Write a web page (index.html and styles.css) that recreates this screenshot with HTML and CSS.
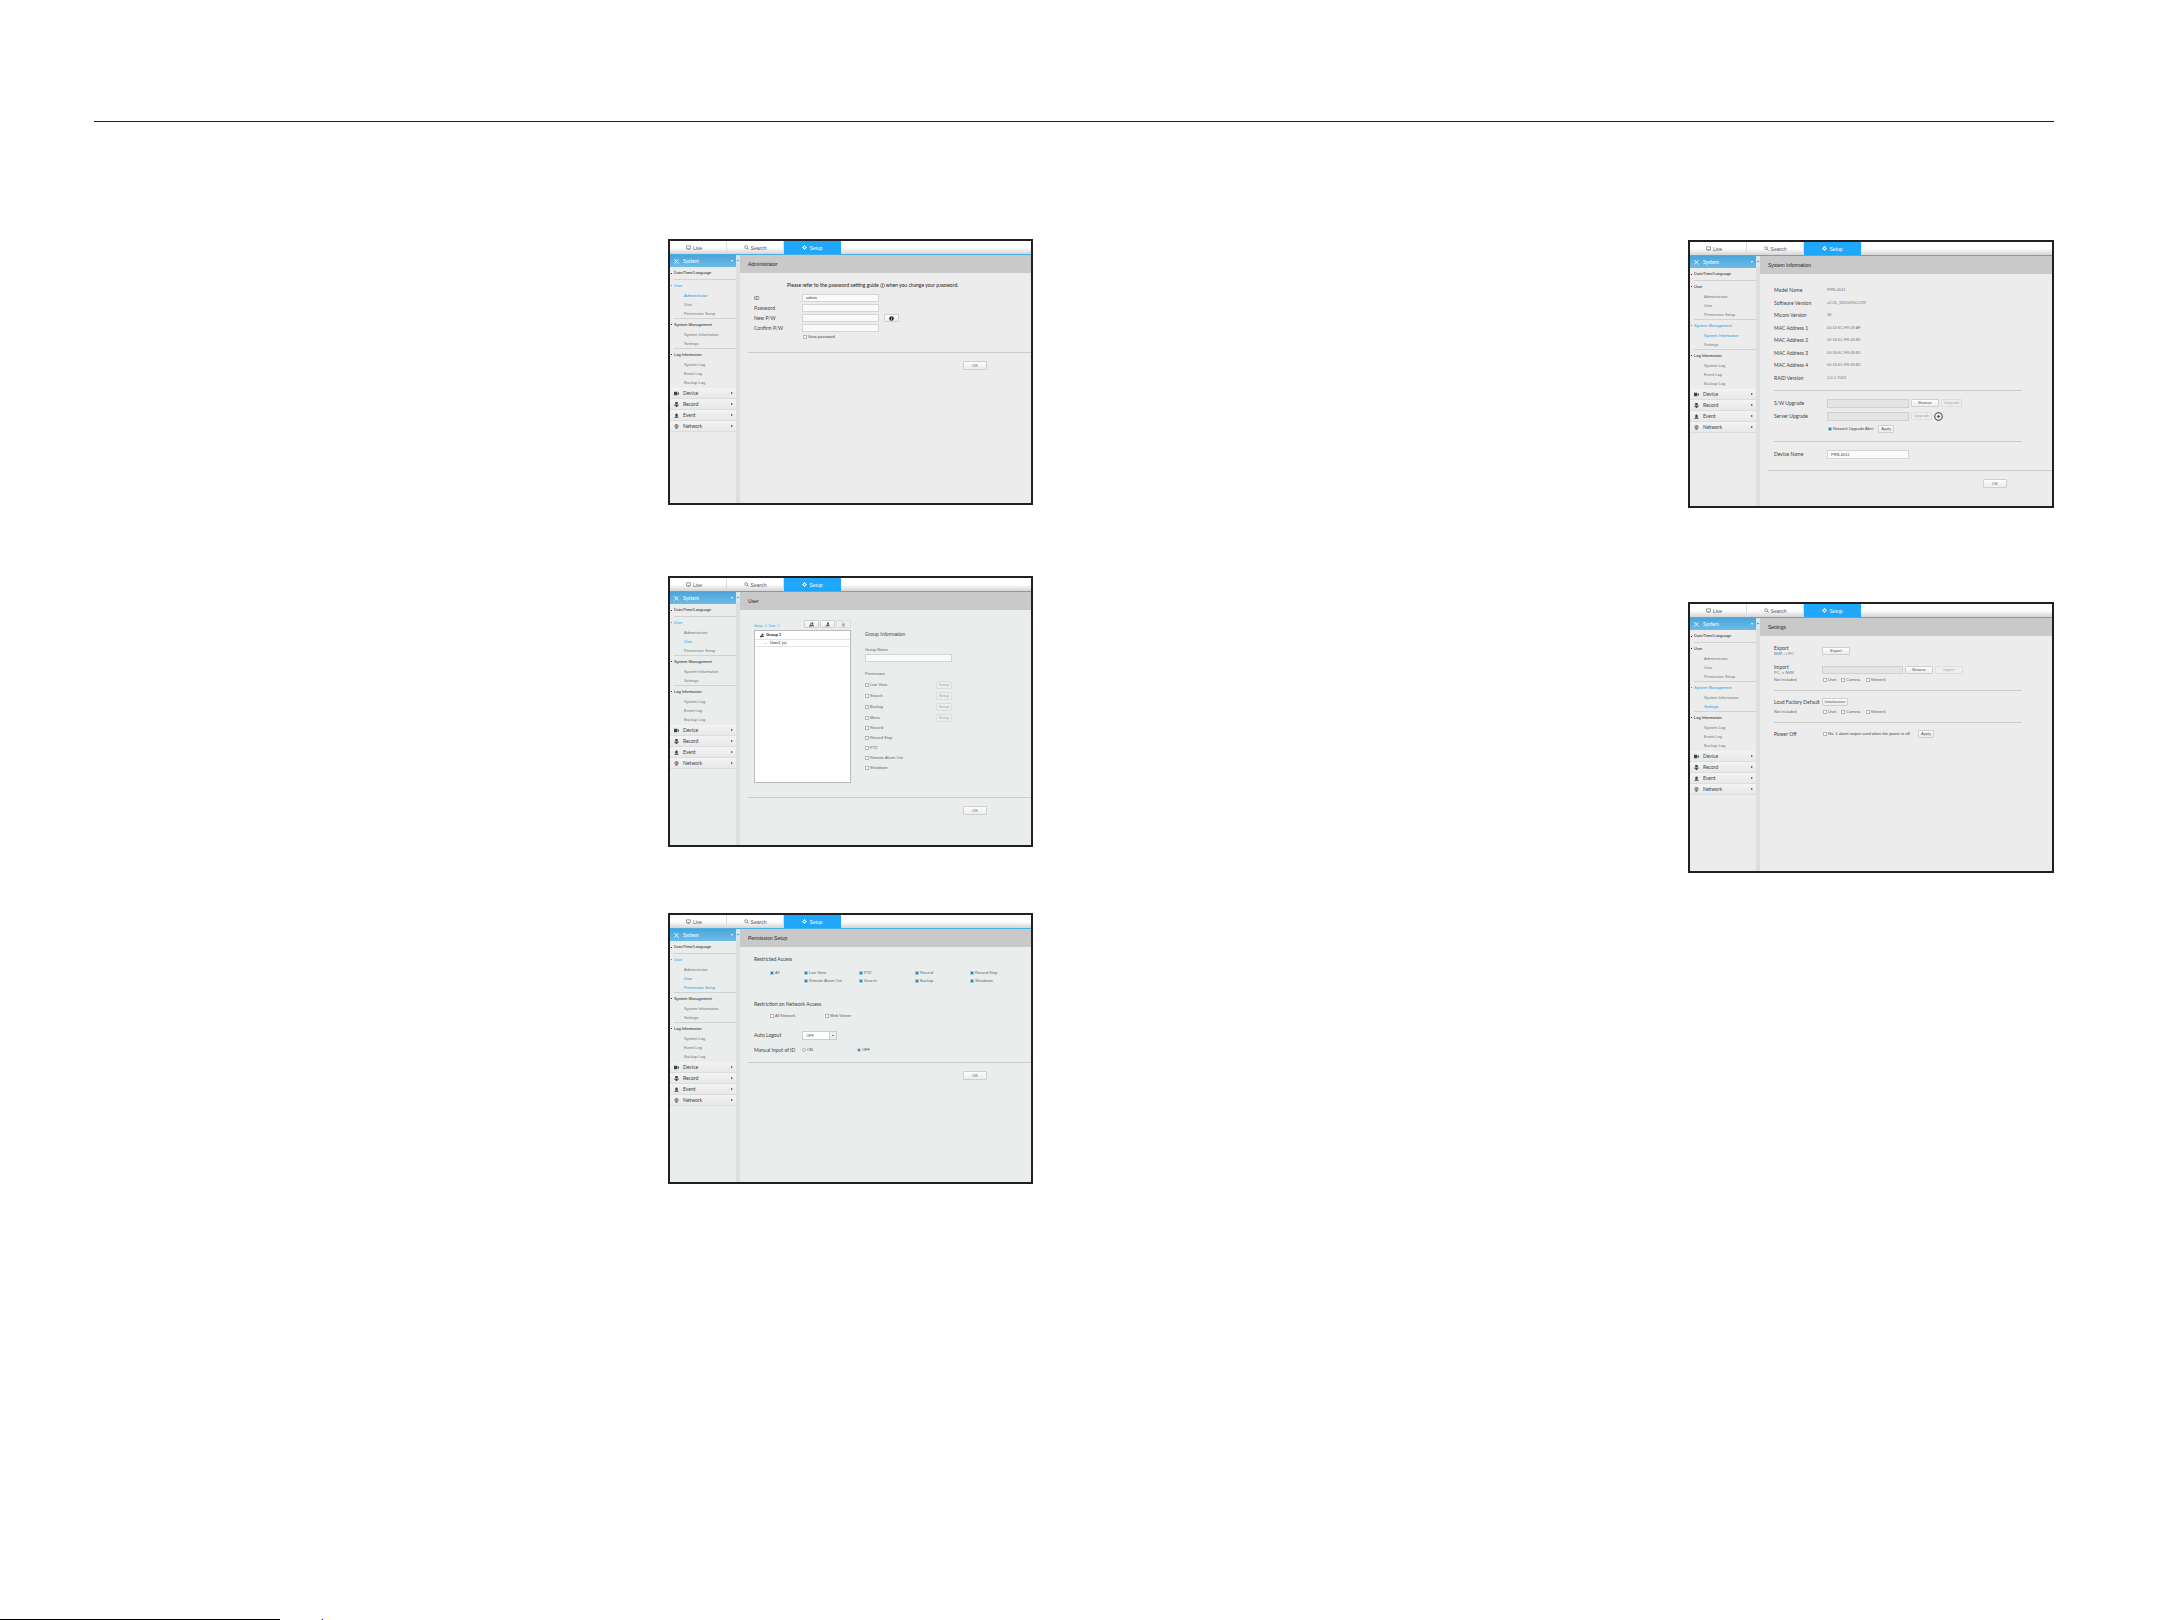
FILE: index.html
```html
<!DOCTYPE html>
<html lang="en">

<head>
    <meta charset="utf-8">
    <title>Web Viewer Setup</title>
    <link rel="stylesheet" href="styles.css">
</head>

<body>
    <svg class="sprite" aria-hidden="true">
        <symbol id="live" viewBox="0 0 12 12"><path d="M1 2h10v7H1zM4 11h4" fill="none" stroke="currentColor" stroke-width="1.4"/></symbol>
        <symbol id="search" viewBox="0 0 12 12"><circle cx="5" cy="5" r="3.5" fill="none" stroke="currentColor" stroke-width="1.3"/><path d="M7.5 7.5L11 11" stroke="currentColor" stroke-width="1.6"/></symbol>
        <symbol id="gear" viewBox="0 0 12 12"><circle cx="6" cy="6" r="3" fill="none" stroke="currentColor" stroke-width="2.4"/><path d="M6 0v3M6 9v3M0 6h3M9 6h3M2 2l2 2M8 8l2 2M10 2L8 4M4 8l-2 2" stroke="currentColor" stroke-width="1.6"/></symbol>
        <symbol id="tools" viewBox="0 0 12 12"><path d="M2 1l9 10M10 1L1 11" stroke="currentColor" stroke-width="2"/><path d="M1 1l3 1-2 2z" fill="currentColor"/></symbol>
        <symbol id="device" viewBox="0 0 12 12"><path d="M0 2h8v8H0zM9 5l3-2v6L9 7z" fill="currentColor"/></symbol>
        <symbol id="record" viewBox="0 0 12 12"><path d="M3 0h6v5H3zM1 6h10v3H8v3H4V9H1z" fill="currentColor"/></symbol>
        <symbol id="event" viewBox="0 0 12 12"><path d="M3 9V4a3 3 0 0 1 6 0v5zM1 10h10v2H1z" fill="currentColor"/></symbol>
        <symbol id="network" viewBox="0 0 12 12"><circle cx="6" cy="5" r="4" fill="none" stroke="currentColor" stroke-width="1.5"/><path d="M2 5h8M6 1v10M3 11h6" stroke="currentColor"/></symbol>
        <symbol id="group" viewBox="0 0 12 12"><circle cx="8" cy="3" r="2.4" fill="currentColor"/><circle cx="4" cy="5" r="1.8" fill="currentColor"/><path d="M5 10c0-5 7-5 7 0zM0 11c0-5 6-5 6 0z" fill="currentColor"/></symbol>
        <symbol id="person" viewBox="0 0 12 12"><circle cx="7" cy="3" r="2.4" fill="currentColor"/><path d="M3 10c0-6 8-6 8 0zM0 9h5v1H0z" fill="currentColor"/></symbol>
        <symbol id="trash" viewBox="0 0 12 12"><path d="M2 2h8v1H2zM3 4h6v7H3z" fill="currentColor"/></symbol>
        <symbol id="info" viewBox="0 0 12 12"><circle cx="6" cy="6" r="5" fill="none" stroke="currentColor"/><path d="M6 3v2M6 5v4" stroke="currentColor" stroke-width="1.3"/></symbol>
        <symbol id="infodark" viewBox="0 0 12 12"><circle cx="6" cy="6" r="5.5" fill="currentColor"/><path d="M6 2v2M6 5v5" stroke="#fff" stroke-width="1.4"/></symbol>
        <symbol id="refresh" viewBox="0 0 12 12"><circle cx="6" cy="6" r="5" fill="none" stroke="currentColor" stroke-width="1.4"/><circle cx="6" cy="6" r="1.6" fill="currentColor"/></symbol>
        <symbol id="up" viewBox="0 0 12 12"><path d="M2 8l4-4 4 4" fill="none" stroke="currentColor" stroke-width="3"/></symbol>
    </svg>

    <main class="sheet">
        <div class="column left">
            <!-- Administrator -->
            <section class="screen short">
                <nav class="tabs">
                    <a href="#" class="live"><svg><use href="#live"/></svg>Live</a>
                    <a href="#"><svg><use href="#search"/></svg>Search</a>
                    <a href="#" class="on"><svg><use href="#gear"/></svg>Setup</a>
                </nav>
                <div class="body">
                    <nav class="side">
                        <a href="#" class="system"><svg><use href="#tools"/></svg>System<i class="down"></i></a>
                        <div class="group first"><a href="#" class="head">Date/Time/Language</a></div>
                        <div class="group"><a href="#" class="head on">User</a><a href="#" class="on">Administrator</a><a href="#">User</a><a href="#">Permission Setup</a></div>
                        <div class="group"><a href="#" class="head">System Management</a><a href="#">System Information</a><a href="#">Settings</a></div>
                        <div class="group last"><a href="#" class="head">Log Information</a><a href="#">System Log</a><a href="#">Event Log</a><a href="#">Backup Log</a></div>
                        <a href="#" class="menu"><svg><use href="#device"/></svg>Device<i></i></a>
                        <a href="#" class="menu"><svg><use href="#record"/></svg>Record<i></i></a>
                        <a href="#" class="menu"><svg><use href="#event"/></svg>Event<i></i></a>
                        <a href="#" class="menu"><svg><use href="#network"/></svg>Network<i></i></a>
                    </nav>
                    <div class="scroll"><span><svg><use href="#up"/></svg></span></div>
                    <div class="main">
                        <h2>Administrator</h2>
                        <form class="admin">
                            <p class="notice">Please refer to the password setting guide <svg><use href="#info"/></svg> when you change your password.</p>
                            <div class="row"><label class="name" for="id">ID</label><input class="text" id="id" type="text" value="admin"></div>
                            <div class="row"><label class="name" for="pw">Password</label><input class="text" id="pw" type="password"></div>
                            <div class="row"><label class="name" for="newpw">New P/W</label><input class="text" id="newpw" type="password"><button type="button" class="guide" aria-label="Password guide"><svg><use href="#infodark"/></svg></button></div>
                            <div class="row"><label class="name" for="confirm">Confirm P/W</label><input class="text" id="confirm" type="password"></div>
                            <div class="row view"><label><input type="checkbox">View password</label></div>
                        </form>
                        <div class="actions"><button>OK</button></div>
                    </div>
                </div>
            </section>

            <!-- User -->
            <section class="screen cool">
                <nav class="tabs">
                    <a href="#" class="live"><svg><use href="#live"/></svg>Live</a>
                    <a href="#"><svg><use href="#search"/></svg>Search</a>
                    <a href="#" class="on"><svg><use href="#gear"/></svg>Setup</a>
                </nav>
                <div class="body">
                    <nav class="side">
                        <a href="#" class="system"><svg><use href="#tools"/></svg>System<i class="down"></i></a>
                        <div class="group first"><a href="#" class="head">Date/Time/Language</a></div>
                        <div class="group"><a href="#" class="head on">User</a><a href="#">Administrator</a><a href="#" class="on">User</a><a href="#">Permission Setup</a></div>
                        <div class="group"><a href="#" class="head">System Management</a><a href="#">System Information</a><a href="#">Settings</a></div>
                        <div class="group last"><a href="#" class="head">Log Information</a><a href="#">System Log</a><a href="#">Event Log</a><a href="#">Backup Log</a></div>
                        <a href="#" class="menu"><svg><use href="#device"/></svg>Device<i></i></a>
                        <a href="#" class="menu"><svg><use href="#record"/></svg>Record<i></i></a>
                        <a href="#" class="menu"><svg><use href="#event"/></svg>Event<i></i></a>
                        <a href="#" class="menu"><svg><use href="#network"/></svg>Network<i></i></a>
                    </nav>
                    <div class="scroll"><span><svg><use href="#up"/></svg></span></div>
                    <div class="main">
                        <h2>User</h2>
                        <form class="users">
                            <div class="tree">
                                <div class="tools">
                                    <span>Group : 1 / User : 1</span>
                                    <button type="button" aria-label="Add group"><svg><use href="#group"/></svg></button>
                                    <button type="button" aria-label="Add user"><svg><use href="#person"/></svg></button>
                                    <button type="button" aria-label="Delete" disabled><svg><use href="#trash"/></svg></button>
                                </div>
                                <ul>
                                    <li class="parent"><svg><use href="#group"/></svg>Group 1</li>
                                    <li><b>∟</b>User1 (a)</li>
                                </ul>
                            </div>
                            <div class="info">
                                <h3>Group Information</h3>
                                <label class="caption" for="gname">Group Name</label>
                                <input class="text" id="gname" type="text">
                                <p class="caption perm">Permission</p>
                                <div class="line tall"><label><input type="checkbox">Live View</label><button type="button" disabled>Setup</button></div>
                                <div class="line tall"><label><input type="checkbox">Search</label><button type="button" disabled>Setup</button></div>
                                <div class="line tall"><label><input type="checkbox">Backup</label><button type="button" disabled>Setup</button></div>
                                <div class="line tall"><label><input type="checkbox">Menu</label><button type="button" disabled>Setup</button></div>
                                <div class="line"><label><input type="checkbox">Record</label></div>
                                <div class="line"><label><input type="checkbox">Record Stop</label></div>
                                <div class="line"><label><input type="checkbox">PTZ</label></div>
                                <div class="line"><label><input type="checkbox">Remote Alarm Out</label></div>
                                <div class="line"><label><input type="checkbox">Shutdown</label></div>
                            </div>
                        </form>
                        <div class="actions"><button>OK</button></div>
                    </div>
                </div>
            </section>

            <!-- Permission Setup -->
            <section class="screen cool">
                <nav class="tabs">
                    <a href="#" class="live"><svg><use href="#live"/></svg>Live</a>
                    <a href="#"><svg><use href="#search"/></svg>Search</a>
                    <a href="#" class="on"><svg><use href="#gear"/></svg>Setup</a>
                </nav>
                <div class="body">
                    <nav class="side">
                        <a href="#" class="system"><svg><use href="#tools"/></svg>System<i class="down"></i></a>
                        <div class="group first"><a href="#" class="head">Date/Time/Language</a></div>
                        <div class="group"><a href="#" class="head on">User</a><a href="#">Administrator</a><a href="#">User</a><a href="#" class="on">Permission Setup</a></div>
                        <div class="group"><a href="#" class="head">System Management</a><a href="#">System Information</a><a href="#">Settings</a></div>
                        <div class="group last"><a href="#" class="head">Log Information</a><a href="#">System Log</a><a href="#">Event Log</a><a href="#">Backup Log</a></div>
                        <a href="#" class="menu"><svg><use href="#device"/></svg>Device<i></i></a>
                        <a href="#" class="menu"><svg><use href="#record"/></svg>Record<i></i></a>
                        <a href="#" class="menu"><svg><use href="#event"/></svg>Event<i></i></a>
                        <a href="#" class="menu"><svg><use href="#network"/></svg>Network<i></i></a>
                    </nav>
                    <div class="scroll"><span><svg><use href="#up"/></svg></span></div>
                    <div class="main">
                        <h2>Permission Setup</h2>
                        <form class="permission">
                            <p class="title">Restricted Access</p>
                            <div class="access">
                                <label><input type="checkbox" checked>All</label>
                                <label><input type="checkbox" checked>Live View</label>
                                <label><input type="checkbox" checked>PTZ</label>
                                <label><input type="checkbox" checked>Record</label>
                                <label><input type="checkbox" checked>Record Stop</label>
                                <label class="second"><input type="checkbox" checked>Remote Alarm Out</label>
                                <label><input type="checkbox" checked>Search</label>
                                <label><input type="checkbox" checked>Backup</label>
                                <label><input type="checkbox" checked>Shutdown</label>
                            </div>
                            <p class="title">Restriction on Network Access</p>
                            <div class="network">
                                <label><input type="checkbox">All Network</label>
                                <label><input type="checkbox">Web Viewer</label>
                            </div>
                            <div class="row logout">
                                <label class="name" for="logout">Auto Logout</label>
                                <select id="logout"><option>OFF</option><option>ON</option></select>
                            </div>
                            <div class="row manual">
                                <span class="name">Manual Input of ID</span>
                                <label><input type="radio" name="manual">ON</label>
                                <label><input type="radio" name="manual" checked>OFF</label>
                            </div>
                        </form>
                        <div class="actions"><button>OK</button></div>
                    </div>
                </div>
            </section>
        </div>

        <div class="column right">
            <!-- System Information -->
            <section class="screen medium">
                <nav class="tabs">
                    <a href="#" class="live"><svg><use href="#live"/></svg>Live</a>
                    <a href="#"><svg><use href="#search"/></svg>Search</a>
                    <a href="#" class="on"><svg><use href="#gear"/></svg>Setup</a>
                </nav>
                <div class="body">
                    <nav class="side">
                        <a href="#" class="system"><svg><use href="#tools"/></svg>System<i class="down"></i></a>
                        <div class="group first"><a href="#" class="head">Date/Time/Language</a></div>
                        <div class="group"><a href="#" class="head">User</a><a href="#">Administrator</a><a href="#">User</a><a href="#">Permission Setup</a></div>
                        <div class="group"><a href="#" class="head on">System Management</a><a href="#" class="on">System Information</a><a href="#">Settings</a></div>
                        <div class="group last"><a href="#" class="head">Log Information</a><a href="#">System Log</a><a href="#">Event Log</a><a href="#">Backup Log</a></div>
                        <a href="#" class="menu"><svg><use href="#device"/></svg>Device<i></i></a>
                        <a href="#" class="menu"><svg><use href="#record"/></svg>Record<i></i></a>
                        <a href="#" class="menu"><svg><use href="#event"/></svg>Event<i></i></a>
                        <a href="#" class="menu"><svg><use href="#network"/></svg>Network<i></i></a>
                    </nav>
                    <div class="scroll"><span><svg><use href="#up"/></svg></span></div>
                    <div class="main">
                        <h2>System Information</h2>
                        <form class="sysinfo">
                            <dl>
                                <dt>Model Name</dt><dd>PRN-4011</dd>
                                <dt>Software Version</dt><dd>v2.26_180509161239</dd>
                                <dt>Micom Version</dt><dd>36</dd>
                                <dt>MAC Address 1</dt><dd>00:16:6C:F8:43:AF</dd>
                                <dt>MAC Address 2</dt><dd>00:16:6C:F8:43:B0</dd>
                                <dt>MAC Address 3</dt><dd>00:16:6C:F8:43:B1</dd>
                                <dt>MAC Address 4</dt><dd>00:16:6C:F8:43:B2</dd>
                                <dt>RAID Version</dt><dd>2.0.5.7063</dd>
                            </dl>
                            <div class="part">
                                <div class="row"><label class="name" for="sw">S/W Upgrade</label><input class="text" id="sw" type="text" disabled><button type="button" class="wide">Browse</button><button type="button" class="upgrade" disabled>Upgrade</button></div>
                                <div class="row"><label class="name" for="server">Server Upgrade</label><input class="text" id="server" type="text" disabled><button type="button" class="upgrade" disabled>Upgrade</button><svg class="refresh"><use href="#refresh"/></svg></div>
                                <div class="row alert"><label><input type="checkbox" checked>Network Upgrade Alert</label><button type="button" class="apply">Apply</button></div>
                            </div>
                            <div class="part">
                                <div class="row"><label class="name" for="dname">Device Name</label><input class="text" id="dname" type="text" value="PRN-4011"></div>
                            </div>
                        </form>
                        <div class="actions"><button>OK</button></div>
                    </div>
                </div>
            </section>

            <!-- Settings -->
            <section class="screen">
                <nav class="tabs">
                    <a href="#" class="live"><svg><use href="#live"/></svg>Live</a>
                    <a href="#"><svg><use href="#search"/></svg>Search</a>
                    <a href="#" class="on"><svg><use href="#gear"/></svg>Setup</a>
                </nav>
                <div class="body">
                    <nav class="side">
                        <a href="#" class="system"><svg><use href="#tools"/></svg>System<i class="down"></i></a>
                        <div class="group first"><a href="#" class="head">Date/Time/Language</a></div>
                        <div class="group"><a href="#" class="head">User</a><a href="#">Administrator</a><a href="#">User</a><a href="#">Permission Setup</a></div>
                        <div class="group"><a href="#" class="head on">System Management</a><a href="#">System Information</a><a href="#" class="on">Settings</a></div>
                        <div class="group last"><a href="#" class="head">Log Information</a><a href="#">System Log</a><a href="#">Event Log</a><a href="#">Backup Log</a></div>
                        <a href="#" class="menu"><svg><use href="#device"/></svg>Device<i></i></a>
                        <a href="#" class="menu"><svg><use href="#record"/></svg>Record<i></i></a>
                        <a href="#" class="menu"><svg><use href="#event"/></svg>Event<i></i></a>
                        <a href="#" class="menu"><svg><use href="#network"/></svg>Network<i></i></a>
                    </nav>
                    <div class="scroll"><span><svg><use href="#up"/></svg></span></div>
                    <div class="main">
                        <h2>Settings</h2>
                        <form class="settings">
                            <div class="row two"><span class="name">Export<small>NVR -&gt; PC</small></span><button type="button" class="wide">Export</button></div>
                            <div class="row two import"><label class="name" for="file">Import<small>PC -&gt; NVR</small></label><input class="text" id="file" type="text" disabled><button type="button" class="wide">Browse</button><button type="button" class="wide" disabled>Import</button></div>
                            <div class="row not"><small class="name">Not Included</small><label class="user"><input type="checkbox">User</label><label class="camera"><input type="checkbox">Camera</label><label><input type="checkbox">Network</label></div>
                            <div class="part">
                                <div class="row"><span class="name">Load Factory Default</span><button type="button" class="init">Initialization</button></div>
                                <div class="row not"><small class="name">Not Included</small><label class="user"><input type="checkbox">User</label><label class="camera"><input type="checkbox">Camera</label><label><input type="checkbox">Network</label></div>
                            </div>
                            <div class="part">
                                <div class="row power"><span class="name">Power Off</span><label><input type="checkbox">No. 1 alarm output used when the power is off.</label><button type="button" class="apply">Apply</button></div>
                            </div>
                        </form>
                    </div>
                </div>
            </section>
        </div>
    </main>
    <footer><span class="bar"></span><span class="dot"></span></footer>
</body>

</html>
```
FILE: styles.css
```css
* {
    box-sizing: border-box;
}

body {
    margin: 0;
    min-height: 100vh;
    display: flex;
    flex-direction: column;
    background-color: #fff;
    font-family: "Liberation Sans", Arial, sans-serif;
    font-size: 4px;
    line-height: 8px;
    color: #444;
}

.sprite {
    display: none;
}

svg {
    width: 5px;
    height: 5px;
    flex: none;
}

a {
    color: inherit;
    text-decoration: none;
}

.sheet {
    margin: 121px 114px 0 94px;
    border-top: 1px solid #231f20;
    display: grid;
    grid-template-columns: 1fr 1fr;
    column-gap: 82px;
}

.column {
    display: flex;
    flex-direction: column;
    align-items: flex-end;
    gap: 66px;
    padding-top: 117px;
}

.column.right {
    gap: 94px;
    padding-top: 118px;
}

.screen {
    width: 366px;
    min-height: 271px;
    display: flex;
    flex-direction: column;
    border: 2px solid #231f20;
    background-color: #ececec;
}

.left .screen {
    width: 365px;
}

.screen.short {
    min-height: 266px;
    margin-bottom: 5px;
}

.screen.medium {
    min-height: 268px;
}

.screen.cool {
    background-color: #e9edec;
}

/* top tabs */
.tabs {
    display: flex;
    height: 14px;
    background: linear-gradient(#fff 50%, #d4d4d4);
    border-bottom: 1px solid #4aaee0;
    font-size: 5px;
}

.tabs a {
    width: 57px;
    display: flex;
    align-items: center;
    justify-content: center;
    gap: 2px;
    border-right: 1px solid #ddd;
    color: #555;
}

.tabs a.live {
    padding-right: 8px;
}

.tabs a.on {
    background-color: #1ea7fb;
    border: 0;
    color: #fff;
}

.body {
    flex: 1;
    display: flex;
}

/* side menu */
.side {
    width: 66px;
}

.side a {
    display: block;
    padding-left: 14px;
    line-height: 9px;
    color: #777;
}

.side a.system,
.side a.menu {
    display: flex;
    align-items: center;
    gap: 4px;
    padding: 0 3px 0 4px;
    height: 11px;
    font-family: Lato, sans-serif;
    font-size: 5px;
    color: #444;
    background: linear-gradient(#f3f3f3, #e8e8e8);
    border-bottom: 1px solid #ddd;
}

.side a.system {
    height: 12px;
    color: #fff;
    background: linear-gradient(#4aa5da, #6dbbe8);
    border: 0;
}

.side i {
    margin-left: auto;
    border: 1px solid transparent;
    border-left: 2px solid #444;
    border-right: 0;
}

.side i.down {
    border: 1px solid transparent;
    border-top: 2px solid #fff;
    border-bottom: 0;
}

.side .group {
    margin-left: 4px;
    border-bottom: 1px solid #d2d2d2;
}

.side .group a {
    padding-left: 10px;
}

.side .group a.head {
    display: flex;
    align-items: center;
    gap: 2px;
    margin-left: -3px;
    padding-left: 0;
    line-height: 11px;
    color: #222;
}

.side .group a.head::before {
    content: "";
    width: 1px;
    height: 1px;
    background-color: currentColor;
}

.side .group.first a.head {
    line-height: 12px;
}

.side .group.last {
    padding-bottom: 1px;
    border: 0;
}

.side .group a.on {
    color: #1e9be8;
}

.scroll {
    width: 4px;
    background-color: #dfdfdf;
}

.scroll span {
    display: flex;
    align-items: center;
    height: 9px;
    margin-top: 1px;
    background-color: #d3eaf7;
    color: #4a9dcc;
}

.scroll svg {
    width: 4px;
}

/* right side */
.main {
    flex: 1;
    min-width: 0;
}

h2 {
    margin: 0;
    padding-left: 8px;
    background-color: #c9c9c9;
    font-size: 5px;
    font-weight: normal;
    line-height: 18px;
    color: #222;
}

form {
    padding-left: 14px;
}

p {
    margin: 0;
}

label,
.row {
    display: flex;
    align-items: center;
}

.name,
.title,
.notice,
dt {
    font-family: Lato, sans-serif;
    font-size: 5px;
}

.name {
    width: 48px;
    flex: none;
    white-space: nowrap;
}

small {
    font-family: "Liberation Sans", Arial, sans-serif;
    font-size: 4px;
    color: #666;
}

button {
    height: 8px;
    padding: 0;
    display: flex;
    align-items: center;
    justify-content: center;
    border: 1px solid #cfcfcf;
    border-radius: 1px;
    background: linear-gradient(#fdfdfd, #ededed);
    font: inherit;
    color: #555;
}

button:disabled {
    background: #eee;
    border-color: #ddd;
    color: #aaa;
}

button.wide {
    width: 28px;
}

button.upgrade {
    width: 21px;
}

button.apply {
    width: 16px;
}

.text {
    height: 8px;
    padding: 0 3px;
    border: 1px solid #d5d5d5;
    background-color: #fafafa;
    font: inherit;
    color: #444;
}

.text:disabled {
    background-color: #e4e4e4;
    border-color: #d0d0d0;
}

input[type=checkbox],
input[type=radio] {
    appearance: none;
    width: 4px;
    height: 4px;
    margin: 0 1px 0 0;
    flex: none;
    border: 1px solid #b5b5b5;
    background-color: #fff;
}

input[type=radio] {
    border-radius: 50%;
}

input[type=checkbox]:checked,
input[type=radio]:checked {
    border-color: #a3cbe2;
    background-color: #2a7cb0;
}

.actions {
    margin-left: 8px;
    padding: 8px 0 8px 215px;
    border-top: 1px solid #cbcbcb;
}

.actions button {
    width: 24px;
    height: 9px;
}

/* Administrator */
.admin {
    padding-top: 8px;
    padding-bottom: 11px;
}

.notice {
    display: flex;
    align-items: center;
    gap: 1px;
    padding-left: 33px;
    margin-bottom: 4px;
    color: #222;
}

.admin .row {
    height: 10px;
}

.admin .text {
    width: 77px;
}

.admin .row.view {
    height: 8px;
    padding-left: 49px;
}

.guide {
    width: 15px;
    margin-left: 5px;
    color: #222;
}

/* User */
.users {
    display: flex;
    gap: 14px;
    padding-top: 10px;
    padding-bottom: 14px;
}

.tree {
    width: 97px;
}

.tools {
    display: flex;
    align-items: flex-end;
    gap: 1px;
    height: 8px;
}

.tools span {
    flex: 1;
    line-height: 4px;
    font-size: 3px;
    color: #2a9be0;
    white-space: nowrap;
}

.tools button {
    width: 15px;
}

.tree ul {
    margin: 2px 0 0;
    padding: 0;
    height: 153px;
    border: 1px solid #bbb;
    background-color: #fff;
    list-style: none;
}

.tree li {
    display: flex;
    align-items: center;
    gap: 2px;
    height: 7px;
    padding-left: 9px;
    border-bottom: 1px solid #e4e4e4;
    color: #222;
}

.tree li.parent {
    height: 9px;
    padding-left: 5px;
    font-weight: bold;
}

.tree li svg {
    width: 4px;
}

.tree li b {
    font-weight: normal;
    color: #888;
}

.info {
    width: 87px;
    padding-top: 9px;
    color: #666;
}

.info h3 {
    margin: 0 0 7px;
    font-size: 5px;
    font-weight: normal;
    line-height: 10px;
    color: #444;
}

.info .text {
    display: block;
    width: 100%;
}

.info .perm {
    margin: 8px 0 1px;
}

.line {
    display: flex;
    align-items: center;
    justify-content: space-between;
    height: 10px;
}

.line.tall {
    height: 11px;
}

.line button {
    width: 16px;
}

/* Permission Setup */
.permission {
    padding-top: 8px;
    padding-bottom: 8px;
}

.access {
    display: grid;
    grid-template-columns: 34px 55px 56px 55px 1fr;
    margin: 6px 0 15px;
    padding-left: 16px;
    color: #666;
}

.access .second {
    grid-column: 2;
}

.network {
    display: grid;
    grid-template-columns: 55px 1fr;
    margin: 4px 0 10px;
    padding-left: 16px;
    color: #666;
}

select {
    width: 35px;
    height: 9px;
    padding: 0 3px;
    appearance: none;
    border: 1px solid #ccc;
    border-radius: 0;
    background: linear-gradient(#888, #888) 29px 3px / 2px 1px no-repeat, linear-gradient(90deg, #fff 26px, #ccc 26px, #ccc 27px, #eee 27px);
    font: inherit;
    color: #555;
}

.logout {
    height: 10px;
    margin-bottom: 6px;
}

.manual label {
    width: 55px;
}

/* System Information */
.sysinfo {
    padding-top: 10px;
    padding-bottom: 11px;
}

dl {
    display: grid;
    grid-template-columns: 53px 1fr;
    grid-auto-rows: 1fr;
    align-items: center;
    height: 100px;
    margin: 0 0 6px;
}

dd {
    margin: 0;
    color: #777;
}

.part {
    display: flex;
    flex-direction: column;
    width: 248px;
    padding: 7px 0;
    border-top: 1px solid #cbcbcb;
}

.sysinfo .part {
    gap: 3px;
}

.sysinfo .part:last-child {
    padding-bottom: 0;
}

.sysinfo .name {
    width: 53px;
}

.sysinfo .row {
    height: 10px;
}

.sysinfo .text {
    width: 82px;
    height: 9px;
}

.sysinfo button {
    margin-left: 2px;
}

.sysinfo .alert {
    padding-left: 54px;
}

.sysinfo .apply {
    margin-left: 5px;
}

.refresh {
    width: 9px;
    height: 9px;
    margin-left: 2px;
}

/* Settings */
.settings {
    padding-top: 9px;
}

.two {
    line-height: 6px;
}

.two .name,
.two small {
    display: block;
}

.import {
    margin-top: 7px;
}

.settings .text {
    width: 81px;
}

.settings .text + button,
.settings button + button {
    margin-left: 2px;
}

.not {
    margin-bottom: 6px;
    color: #666;
}

.not .name {
    font-family: inherit;
    font-size: 4px;
}

.part .not {
    margin: 2px 0 0;
}

.settings .part {
    padding-bottom: 6px;
}

.not .user {
    width: 18px;
    margin-left: 1px;
}

.not .camera {
    width: 25px;
}

.init {
    width: 26px;
}

.power label {
    width: 95px;
    margin-left: 1px;
    white-space: nowrap;
}

/* page end */
footer {
    display: flex;
    gap: 41px;
    margin-top: auto;
}

footer .bar {
    width: 280px;
    height: 1px;
    background-color: #000;
}

footer .dot {
    width: 2px;
    height: 1px;
    background: linear-gradient(90deg, #c8b48c 50%, #1a00c8 50%);
}
```
